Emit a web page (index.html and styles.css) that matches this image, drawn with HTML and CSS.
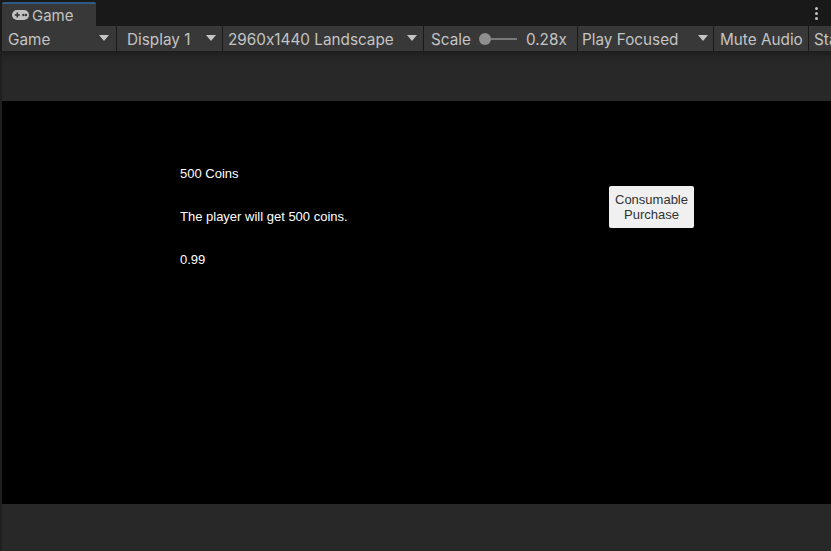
FILE: index.html
```html
<!DOCTYPE html>
<html>
<head>
<meta charset="utf-8">
<link rel="stylesheet" href="styles.css">
</head>
<body>
<div class="window">
  <div class="tabbar">
    <div class="tab">
      <svg class="tab-icon" width="17" height="10" viewBox="0 0 17 10">
        <rect x="0" y="0" width="17" height="10" rx="5" fill="#c2c2c2"/>
        <rect x="2.8" y="4.2" width="5" height="1.6" fill="#383838"/>
        <rect x="4.5" y="2.5" width="1.6" height="5" fill="#383838"/>
        <circle cx="11.4" cy="5" r="1.2" fill="#383838"/>
        <circle cx="14" cy="5" r="1.2" fill="#383838"/>
      </svg>
      <span class="tab-label">Game</span>
    </div>
    <div class="tab-spacer"></div>
    <div class="kebab"><span></span><span></span><span></span></div>
  </div>
  <div class="toolbar">
    <div class="tool tool-game"><span class="tool-text">Game</span><span class="arrow"></span></div>
    <div class="tool tool-display"><span class="tool-text">Display 1</span><span class="arrow"></span></div>
    <div class="tool tool-res"><span class="tool-text">2960x1440 Landscape</span><span class="arrow"></span></div>
    <div class="tool tool-scale">
      <span class="tool-text">Scale</span>
      <span class="slider"><span class="knob"></span><span class="track"></span></span>
      <span class="tool-text scale-val">0.28x</span>
    </div>
    <div class="tool tool-play"><span class="tool-text">Play Focused</span><span class="arrow"></span></div>
    <div class="tool tool-mute"><span class="tool-text">Mute Audio</span></div>
    <div class="tool tool-stats"><span class="tool-text">Sta</span></div>
  </div>
  <div class="view">
    <div class="game">
      <div class="product">
        <div class="line">500 Coins</div>
        <div class="line">The player will get 500 coins.</div>
        <div class="line">0.99</div>
      </div>
      <div class="buy">Consumable<br>Purchase</div>
    </div>
  </div>
</div>
</body>
</html>
```

FILE: styles.css
```css
html, body {
  margin: 0;
  padding: 0;
  background: #191919;
}
.window {
  width: 831px;
  height: 551px;
  overflow: hidden;
  display: flex;
  flex-direction: column;
  font-family: Inter, "Noto Sans", sans-serif;
  font-feature-settings: "calt" 0;
  color: #c4c4c4;
}
.tabbar {
  height: 26px;
  display: flex;
  align-items: flex-end;
  background: #191919;
  flex: none;
}
.tab {
  margin-left: 2px;
  width: 94px;
  height: 22px;
  background: #383838;
  border-top: 2px solid #2d5c88;
  box-sizing: content-box;
  display: flex;
  align-items: center;
  border-radius: 2px 2px 0 0;
}
.tab-icon {
  margin-left: 10px;
  margin-right: 3px;
  flex: none;
}
.tab-label {
  font-size: 15px;
  color: #c4c4c4;
}
.tab-spacer {
  flex: 1;
}
.kebab {
  width: 4px;
  margin-right: 13px;
  align-self: center;
  display: flex;
  flex-direction: column;
  gap: 2px;
  align-items: center;
}
.kebab span {
  width: 3px;
  height: 3px;
  border-radius: 50%;
  background: #c4c4c4;
}
.toolbar {
  height: 26px;
  flex: none;
  display: flex;
  background: #191919;
  padding-left: 2px;
  border-bottom: 1px solid #1e1e1e;
  box-sizing: border-box;
}
.tool {
  background: #383838;
  display: flex;
  align-items: center;
  margin-right: 1px;
  font-size: 15.3px;
  white-space: nowrap;
  overflow: hidden;
  flex: none;
  box-sizing: border-box;
  height: 25px;
  padding-top: 2px;
}
.tool-text {
  color: #c4c4c4;
}
.arrow {
  margin-left: auto;
  width: 0;
  height: 0;
  border-left: 5px solid transparent;
  border-right: 5px solid transparent;
  border-top: 6px solid #c4c4c4;
  position: relative;
  top: -2px;
}
.tool-game { width: 114px; padding-left: 6px; padding-right: 7px; }
.tool-display { width: 105px; padding-left: 10px; padding-right: 6px; }
.tool-res { width: 200px; padding-left: 5px; padding-right: 6px; }
.tool-scale { width: 153px; padding-left: 7px; }
.tool-play { width: 135px; padding-left: 4px; padding-right: 5px; }
.tool-mute { width: 94px; padding-left: 6px; }
.tool-stats { flex: 1; padding-left: 5px; margin-right: 0; }
.slider {
  display: flex;
  align-items: center;
  margin-left: 8px;
  width: 40px;
  position: relative;
  top: -1px;
}
.knob {
  width: 12px;
  height: 12px;
  border-radius: 50%;
  background: #8f8f8f;
  flex: none;
}
.track {
  width: 26px;
  height: 2px;
  background: #7a7a7a;
  flex: none;
}
.scale-val {
  margin-left: 7px;
}
.view {
  flex: 1;
  background: linear-gradient(#1e1e1e 0px, #262626 6px, #282828 14px);
  border-left: 2px solid #1f1f1f;
  padding-top: 49px;
  padding-bottom: 47px;
  display: flex;
  flex-direction: column;
}
.game {
  flex: 1;
  background: #000;
  display: flex;
  align-items: flex-start;
  font-family: "Liberation Sans", Arial, sans-serif;
  color: #fff;
}
.product {
  margin-left: 178px;
  margin-top: 65px;
  font-size: 13px;
  width: 429px;
}
.line {
  height: 43px;
  line-height: 15px;
}
.buy {
  margin-top: 85px;
  width: 85px;
  height: 42px;
  background: #f0f0f0;
  border-radius: 2px;
  color: #323232;
  font-size: 13px;
  line-height: 15px;
  text-align: center;
  box-sizing: border-box;
  padding-top: 6px;
}
```
